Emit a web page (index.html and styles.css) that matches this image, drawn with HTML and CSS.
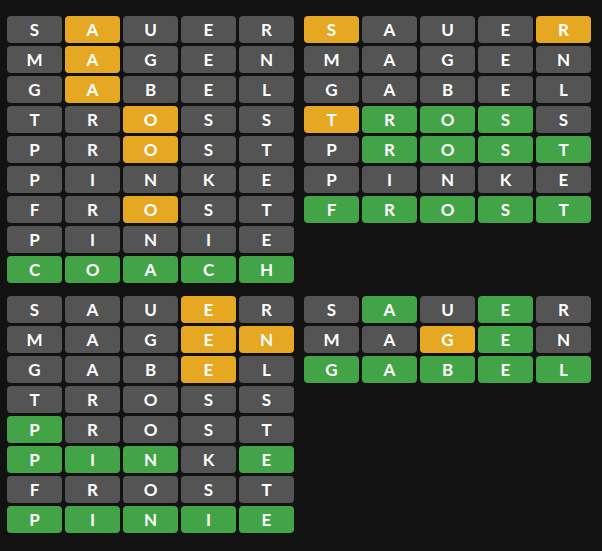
FILE: index.html
```html
<!DOCTYPE html>
<html>
<head>
<meta charset="utf-8">
<link rel="stylesheet" href="styles.css">
</head>
<body>
<main class="boards">
  <section class="board">
    <div class="t">S</div><div class="t y">A</div><div class="t">U</div><div class="t">E</div><div class="t">R</div>
    <div class="t">M</div><div class="t y">A</div><div class="t">G</div><div class="t">E</div><div class="t">N</div>
    <div class="t">G</div><div class="t y">A</div><div class="t">B</div><div class="t">E</div><div class="t">L</div>
    <div class="t">T</div><div class="t">R</div><div class="t y">O</div><div class="t">S</div><div class="t">S</div>
    <div class="t">P</div><div class="t">R</div><div class="t y">O</div><div class="t">S</div><div class="t">T</div>
    <div class="t">P</div><div class="t">I</div><div class="t">N</div><div class="t">K</div><div class="t">E</div>
    <div class="t">F</div><div class="t">R</div><div class="t y">O</div><div class="t">S</div><div class="t">T</div>
    <div class="t">P</div><div class="t">I</div><div class="t">N</div><div class="t">I</div><div class="t">E</div>
    <div class="t g">C</div><div class="t g">O</div><div class="t g">A</div><div class="t g">C</div><div class="t g">H</div>
  </section>
  <section class="board">
    <div class="t y">S</div><div class="t">A</div><div class="t">U</div><div class="t">E</div><div class="t y">R</div>
    <div class="t">M</div><div class="t">A</div><div class="t">G</div><div class="t">E</div><div class="t">N</div>
    <div class="t">G</div><div class="t">A</div><div class="t">B</div><div class="t">E</div><div class="t">L</div>
    <div class="t y">T</div><div class="t g">R</div><div class="t g">O</div><div class="t g">S</div><div class="t">S</div>
    <div class="t">P</div><div class="t g">R</div><div class="t g">O</div><div class="t g">S</div><div class="t g">T</div>
    <div class="t">P</div><div class="t">I</div><div class="t">N</div><div class="t">K</div><div class="t">E</div>
    <div class="t g">F</div><div class="t g">R</div><div class="t g">O</div><div class="t g">S</div><div class="t g">T</div>
  </section>
  <section class="board">
    <div class="t">S</div><div class="t">A</div><div class="t">U</div><div class="t y">E</div><div class="t">R</div>
    <div class="t">M</div><div class="t">A</div><div class="t">G</div><div class="t y">E</div><div class="t y">N</div>
    <div class="t">G</div><div class="t">A</div><div class="t">B</div><div class="t y">E</div><div class="t">L</div>
    <div class="t">T</div><div class="t">R</div><div class="t">O</div><div class="t">S</div><div class="t">S</div>
    <div class="t g">P</div><div class="t">R</div><div class="t">O</div><div class="t">S</div><div class="t">T</div>
    <div class="t g">P</div><div class="t g">I</div><div class="t g">N</div><div class="t">K</div><div class="t g">E</div>
    <div class="t">F</div><div class="t">R</div><div class="t">O</div><div class="t">S</div><div class="t">T</div>
    <div class="t g">P</div><div class="t g">I</div><div class="t g">N</div><div class="t g">I</div><div class="t g">E</div>
  </section>
  <section class="board">
    <div class="t">S</div><div class="t g">A</div><div class="t">U</div><div class="t g">E</div><div class="t">R</div>
    <div class="t">M</div><div class="t">A</div><div class="t y">G</div><div class="t g">E</div><div class="t">N</div>
    <div class="t g">G</div><div class="t g">A</div><div class="t g">B</div><div class="t g">E</div><div class="t g">L</div>
  </section>
</main>
</body>
</html>
```
FILE: styles.css
```css
html, body {
  margin: 0;
  padding: 0;
  background: #121212;
}
.boards {
  display: grid;
  grid-template-columns: 287px 287px;
  column-gap: 10px;
  row-gap: 13px;
  padding: 16px 0 0 7px;
  align-items: start;
}
.board {
  display: grid;
  grid-template-columns: repeat(5, 55px);
  grid-auto-rows: 27px;
  gap: 3px;
}
.t {
  background: #545454;
  border-radius: 4px;
  color: #ffffff;
  font-family: "Lato", "DejaVu Sans", sans-serif;
  font-weight: 700;
  font-size: 17px;
  display: flex;
  align-items: center;
  justify-content: center;
}
.t.y {
  background: #e6a823;
}
.t.g {
  background: #43a447;
}
```
